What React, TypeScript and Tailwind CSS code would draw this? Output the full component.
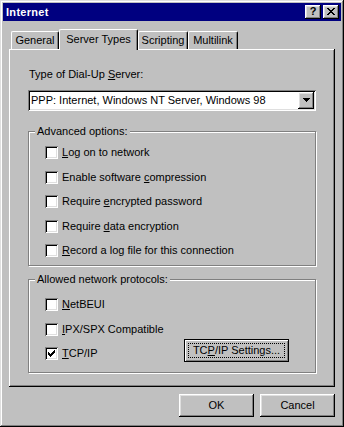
import React from "react";

const raised =
  "shadow-[inset_-1px_-1px_#000,inset_1px_1px_#fff,inset_-2px_-2px_#808080,inset_2px_2px_#dfdfdf]";
const sunken =
  "shadow-[inset_1px_1px_#808080,inset_-1px_-1px_#fff,inset_2px_2px_#000,inset_-2px_-2px_#dfdfdf]";

function Check({ checked }: { checked?: boolean }) {
  return (
    <div
      className={`w-[13px] h-[13px] bg-white shrink-0 flex items-center justify-center ${sunken}`}
    >
      {checked && (
        <svg width="7" height="7" viewBox="0 0 7 7" shapeRendering="crispEdges">
          <path
            d="M6 0h1v1H6z M5 1h2v1H5z M0 2h1v1H0z M4 2h3v1H4z M0 3h2v1H0z M3 3h3v1H3z M0 4h5v1H0z M1 5h3v1H1z M2 6h1v1H2z"
            fill="#000"
          />
        </svg>
      )}
    </div>
  );
}

function Row({
  children,
  checked,
  className = "",
}: {
  children: React.ReactNode;
  checked?: boolean;
  className?: string;
}) {
  return (
    <div className={`flex items-center h-[13px] ${className}`}>
      <Check checked={checked} />
      <span className="ml-[4px] whitespace-nowrap leading-[13px]">{children}</span>
    </div>
  );
}

function U({ children }: { children: React.ReactNode }) {
  return <span className="underline decoration-[1px] underline-offset-[1px]">{children}</span>;
}

function Group({
  title,
  className = "",
  children,
}: {
  title: string;
  className?: string;
  children: React.ReactNode;
}) {
  return (
    <div
      className={`relative border border-[#808080] shadow-[inset_1px_1px_#fff,1px_1px_#fff] ${className}`}
    >
      <span className="absolute left-[6px] -top-[7px] px-[2px] bg-[#c0c0c0] leading-[13px] whitespace-nowrap">
        {title}
      </span>
      {children}
    </div>
  );
}

function Tab({
  label,
  width,
  selected,
}: {
  label: string;
  width: string;
  selected?: boolean;
}) {
  return (
    <div
      className={`${width} ${
        selected ? "h-[21px] mb-[-1px] relative z-10 pb-[2px]" : "h-[18px]"
      } bg-[#c0c0c0] border-l border-t border-r border-l-white border-t-white border-r-black rounded-t-[2px] shadow-[inset_-1px_0_#808080] flex items-center justify-center whitespace-nowrap`}
    >
      {label}
    </div>
  );
}

export default function App() {
  return (
    <div
      className={`w-[344px] h-[427px] bg-[#c0c0c0] p-[3px] flex flex-col text-[11px] leading-[13px] text-black font-['Liberation_Sans',Arial,sans-serif] shadow-[inset_-1px_-1px_#000,inset_1px_1px_#dfdfdf,inset_-2px_-2px_#808080,inset_2px_2px_#fff]`}
    >
      {/* Title bar */}
      <div className="h-[18px] shrink-0 bg-[#000080] flex items-center pl-[3px] pr-[2px]">
        <span className="text-white font-bold tracking-[0.3px]">Internet</span>
        <div className="ml-auto flex gap-[2px]">
          <div
            className={`w-[16px] h-[14px] bg-[#c0c0c0] flex items-center justify-center pb-[1px] font-bold text-[11px] leading-none ${raised}`}
          >
            ?
          </div>
          <div className={`w-[16px] h-[14px] bg-[#c0c0c0] pl-[4px] pt-[3px] ${raised}`}>
            <svg width="8" height="7" viewBox="0 0 8 7" shapeRendering="crispEdges" className="block">
              <path
                d="M0 0h2v1H0z M6 0h2v1H6z M1 1h2v1H1z M5 1h2v1H5z M2 2h4v1H2z M3 3h2v1H3z M2 4h4v1H2z M1 5h2v1H1z M5 5h2v1H5z M0 6h2v1H0z M6 6h2v1H6z"
                fill="#000"
              />
            </svg>
          </div>
        </div>
      </div>

      {/* Body */}
      <div className="px-[6px] pt-[8px] flex flex-col">
        {/* Tabs */}
        <div className="h-[20px] flex items-end pl-[2px]">
          <Tab label="General" width="w-[48px]" />
          <Tab label="Server Types" width="w-[79px]" selected />
          <Tab label="Scripting" width="w-[50px]" />
          <Tab label="Multilink" width="w-[50px]" />
        </div>

        {/* Panel */}
        <div className="h-[338px] bg-[#c0c0c0] px-[19px] pt-[19px] flex flex-col shadow-[inset_-1px_-1px_#000,inset_1px_1px_#fff,inset_-2px_-2px_#808080]">
          <div className="ml-[1px] h-[13px] whitespace-nowrap">
            Type of Dial-Up <U>S</U>erver:
          </div>
          <div className={`mt-[9px] w-[288px] h-[21px] bg-white flex items-center pl-[3px] ${sunken}`}>
            <span className="whitespace-nowrap">PPP: Internet, Windows NT Server, Windows 98</span>
            <div className={`ml-auto mr-[2px] w-[16px] h-[17px] bg-[#c0c0c0] pl-[5px] pt-[6px] ${raised}`}>
              <svg width="7" height="4" viewBox="0 0 7 4" shapeRendering="crispEdges" className="block">
                <path d="M0 0h7v1H0z M1 1h5v1H1z M2 2h3v1H2z M3 3h1v1H3z" fill="#000" />
              </svg>
            </div>
          </div>

          <Group title="Advanced options:" className="mt-[20px] h-[135px] pl-[16px] pt-[14px]">
            <Row>
              <U>L</U>og on to network
            </Row>
            <Row className="mt-[12px]">
              Enable software <U>c</U>ompression
            </Row>
            <Row className="mt-[11px]">
              Require <U>e</U>ncrypted password
            </Row>
            <Row className="mt-[12px]">
              Require <U>d</U>ata encryption
            </Row>
            <Row className="mt-[11px]">
              <U>R</U>ecord a log file for this connection
            </Row>
          </Group>

          <Group title="Allowed network protocols:" className="mt-[13px] h-[94px] pl-[16px] pt-[18px]">
            <Row>
              <U>N</U>etBEUI
            </Row>
            <Row className="mt-[12px]">
              <U>I</U>PX/SPX Compatible
            </Row>
            <div className="mt-[3px] h-[23px] flex items-start">
              <Row checked className="mt-[8px]">
                <U>T</U>CP/IP
              </Row>
              <div className="ml-auto mr-[26px] w-[105px] h-[23px] border border-black bg-[#c0c0c0] p-[3px] shadow-[inset_1px_1px_#fff,inset_-1px_-1px_#808080]">
                <div className="w-full h-full border border-dotted border-black flex items-center justify-center whitespace-nowrap">
                  TC<U>P</U>/IP Settings...
                </div>
              </div>
            </div>
          </Group>
        </div>

        {/* Buttons */}
        <div className="mt-[7px] flex justify-end gap-[6px]">
          <div className={`w-[75px] h-[23px] bg-[#c0c0c0] flex items-center justify-center ${raised}`}>OK</div>
          <div className={`w-[75px] h-[23px] bg-[#c0c0c0] flex items-center justify-center ${raised}`}>
            Cancel
          </div>
        </div>
      </div>
    </div>
  );
}
